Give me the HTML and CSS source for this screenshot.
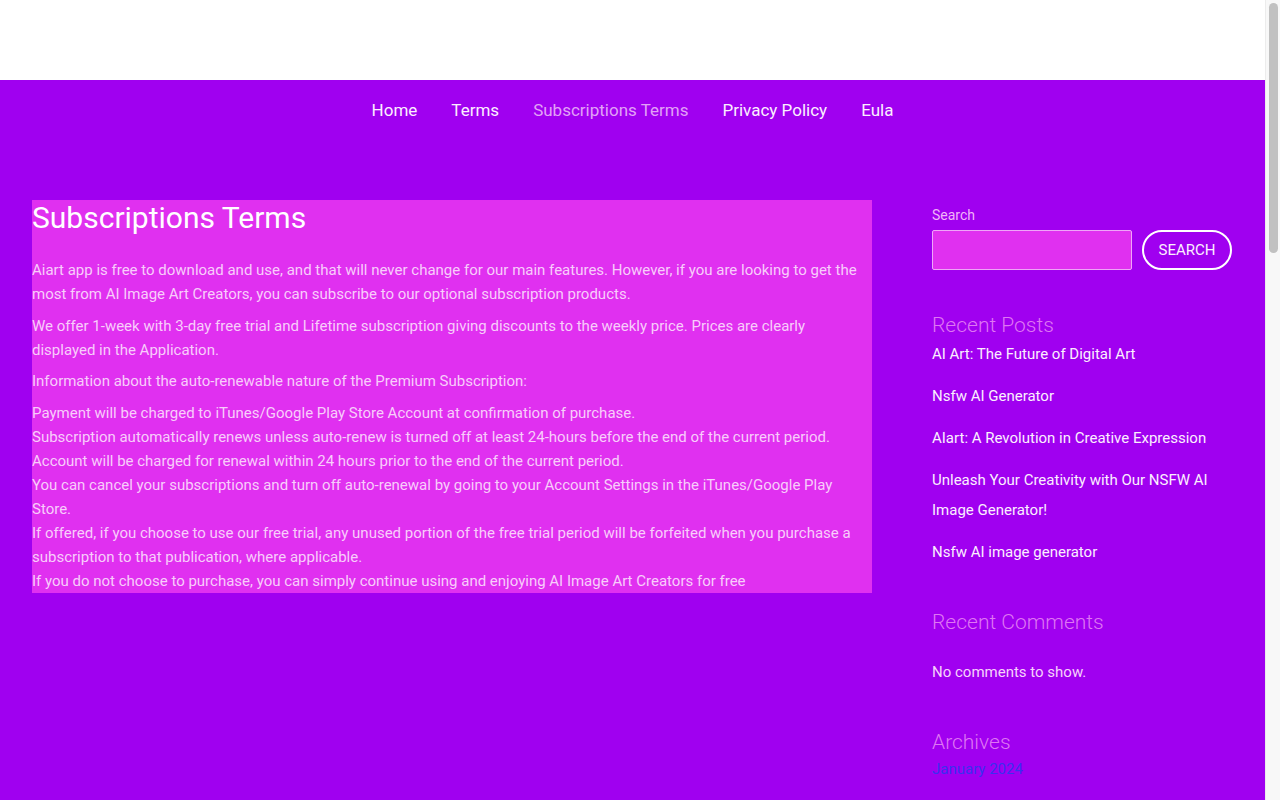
FILE: index.html
```html
<!DOCTYPE html>
<html>
<head>
  <meta charset="utf-8">
  <title>Subscriptions Terms</title>
  <link rel="stylesheet" href="styles.css">
</head>
<body>
  <header class="site-header"></header>

  <nav class="main-nav">
    <a href="#">Home</a>
    <a href="#">Terms</a>
    <a href="#" class="current">Subscriptions Terms</a>
    <a href="#">Privacy Policy</a>
    <a href="#">Eula</a>
  </nav>

  <div class="site-content">
    <main class="entry">
      <h1>Subscriptions Terms</h1>
      <p>Aiart app is free to download and use, and that will never change for our main features. However, if you are looking to get the most from AI Image Art Creators, you can subscribe to our optional subscription products.</p>
      <p>We offer 1-week with 3-day free trial and Lifetime subscription giving discounts to the weekly price. Prices are clearly displayed in the Application.</p>
      <p>Information about the auto-renewable nature of the Premium Subscription:</p>
      <p class="last">Payment will be charged to iTunes/Google Play Store Account at confirmation of purchase.<br>
      Subscription automatically renews unless auto-renew is turned off at least 24-hours before the end of the current period.<br>
      Account will be charged for renewal within 24 hours prior to the end of the current period.<br>
      You can cancel your subscriptions and turn off auto-renewal by going to your Account Settings in the iTunes/Google Play Store.<br>
      If offered, if you choose to use our free trial, any unused portion of the free trial period will be forfeited when you purchase a subscription to that publication, where applicable.<br>
      If you do not choose to purchase, you can simply continue using and enjoying AI Image Art Creators for free</p>
    </main>

    <aside class="sidebar">
      <form class="search-form">
        <label for="s">Search</label>
        <div class="search-row">
          <input type="text" id="s">
          <button type="button">Search</button>
        </div>
      </form>

      <section class="widget">
        <h2>Recent Posts</h2>
        <ul class="post-list">
          <li><a href="#">AI Art: The Future of Digital Art</a></li>
          <li><a href="#">Nsfw AI Generator</a></li>
          <li><a href="#">AIart: A Revolution in Creative Expression</a></li>
          <li><a href="#">Unleash Your Creativity with Our NSFW AI Image Generator!</a></li>
          <li><a href="#">Nsfw AI image generator</a></li>
        </ul>
      </section>

      <section class="widget">
        <h2 class="spaced">Recent Comments</h2>
        <p class="no-comments">No comments to show.</p>
      </section>

      <section class="widget">
        <h2>Archives</h2>
        <ul class="archive-list">
          <li><a href="#">January 2024</a></li>
        </ul>
      </section>

      <section class="widget">
        <h2>Categories</h2>
        <ul class="archive-list">
          <li><a href="#">Uncategorized</a></li>
        </ul>
      </section>
    </aside>
  </div>

  <!-- browser scrollbar look-alike -->
  <div class="scrollbar"><div class="scroll-thumb"></div></div>
</body>
</html>
```

FILE: styles.css
```css
* {
  box-sizing: border-box;
  margin: 0;
  padding: 0;
}

body {
  font-family: Roboto, 'Liberation Sans', sans-serif;
  background-color: #a000f0;
  color: #fff;
  margin-right: 15px;
}

a {
  text-decoration: none;
}

.site-header {
  height: 80px;
  background-color: #fff;
}

/* Top navigation */
.main-nav {
  display: flex;
  justify-content: center;
  padding-top: 18px;
  height: 120px;
}

.main-nav a {
  color: #fbeefe;
  font-size: 17px;
  line-height: 24px;
  padding: 0 17px;
}

.main-nav a.current {
  color: #e2a2f6;
}

/* Page body */
.site-content {
  display: flex;
  align-items: flex-start;
  gap: 60px;
  padding: 0 33px 0 32px;
  min-height: 2440px;
}

.entry {
  flex: 1;
  background-color: #e030f0;
  color: #f8cdfb;
  font-size: 15px;
  line-height: 24px;
}

.entry h1 {
  color: #fff;
  font-size: 30px;
  font-weight: 400;
  line-height: 36px;
  margin-bottom: 22px;
}

.entry p {
  margin-bottom: 7.5px;
}

.entry p.last {
  margin-bottom: 0;
}

/* Sidebar */
.sidebar {
  width: 300px;
  padding-top: 5px;
}

.search-form label {
  display: block;
  color: #f1b4f8;
  font-size: 14px;
  line-height: 20px;
  margin-bottom: 5px;
}

.search-row {
  display: flex;
  gap: 10px;
}

.search-row input {
  width: 200px;
  height: 40px;
  background: #e030f0;
  border: 1px solid #f0a4f8;
  border-radius: 2px;
}

.search-row button {
  width: 90px;
  height: 40px;
  background: transparent;
  border: 2px solid #fff;
  border-radius: 20px;
  color: #fbeefe;
  font-family: inherit;
  font-size: 15px;
  text-transform: uppercase;
}

.widget {
  margin-top: 41px;
}

.widget h2 {
  color: #df76f3;
  font-size: 21px;
  font-weight: 300;
  line-height: 28px;
}

.widget h2.spaced {
  margin-bottom: 21px;
}

.post-list {
  list-style: none;
}

.post-list li {
  font-size: 15px;
  line-height: 30px;
  margin-bottom: 12px;
}

.post-list a {
  color: #fbeefe;
}

.no-comments {
  color: #f6d2fb;
  font-size: 15px;
  line-height: 30px;
  margin-bottom: 38px;
}

.archive-list {
  list-style: none;
}

.archive-list li {
  font-size: 15px;
  line-height: 27px;
}

.archive-list a {
  color: #3a2ff0;
}

/* Scrollbar strip on the right edge */
.scrollbar {
  position: fixed;
  top: 0;
  right: 0;
  width: 15px;
  height: 100vh;
  background: #f8f8f8;
  border-left: 1px solid #ececec;
  padding: 3px 2px 0 3px;
}

.scroll-thumb {
  height: 250px;
  background: #c1c1c1;
  border-radius: 5px;
}
```
